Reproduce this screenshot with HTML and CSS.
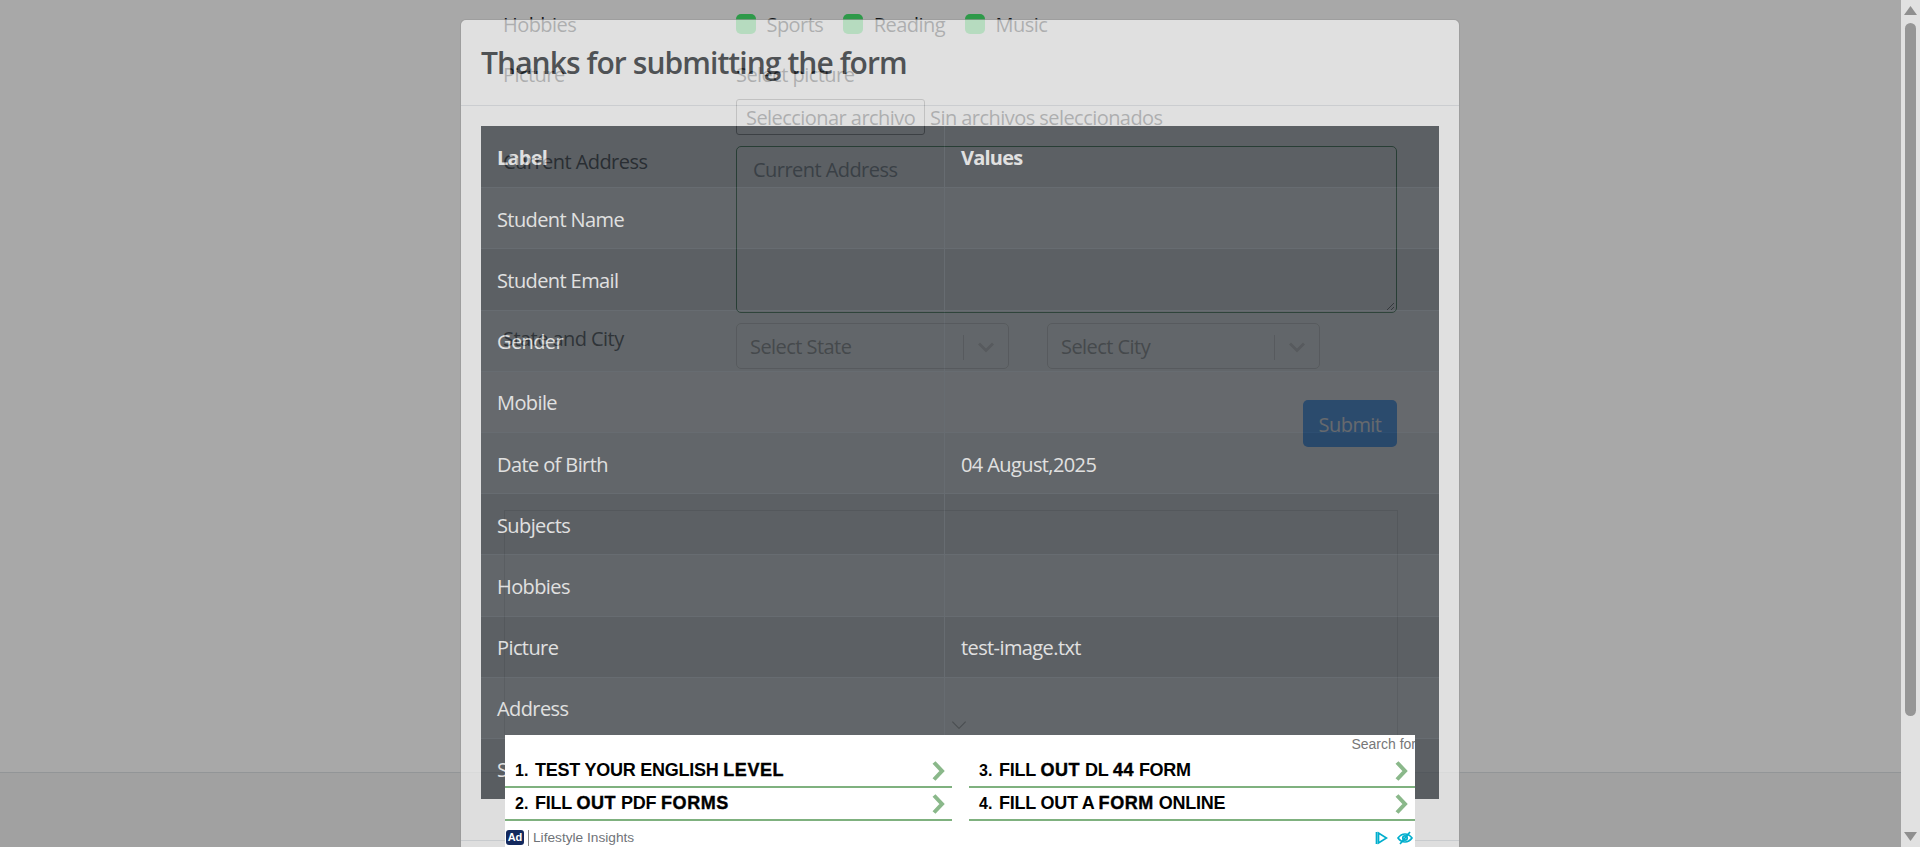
FILE: index.html
```html
<!DOCTYPE html>
<html lang="en">
<head>
  <meta charset="UTF-8">
  <meta name="viewport" content="width=device-width, initial-scale=1.0">
  <title>Practice Form</title>
  <link rel="stylesheet" href="styles.css">
</head>
<body>

  <div class="window">
    <div class="page">
      <form class="practiceForm">
        <div class="formRow hobbiesRow">
          <div class="formLabel">Hobbies</div>
          <div class="checks">
            <span class="check"><i class="checkBox"></i>Sports</span>
            <span class="check"><i class="checkBox"></i>Reading</span>
            <span class="check"><i class="checkBox"></i>Music</span>
          </div>
        </div>
        <div class="formRow pictureRow">
          <div class="formLabel">Picture</div>
          <div>
            <div class="pictureTitle">Select picture</div>
            <div class="fileLine"><span class="fileButton">Seleccionar archivo</span><span class="fileName">Sin archivos seleccionados</span></div>
          </div>
        </div>
        <div class="formRow addressRow">
          <div class="formLabel">Current Address</div>
          <div class="addressBox">
            Current Address
            <svg class="resizeGrip" viewBox="0 0 10 10"><path d="M9 2 2 9M9 6 6 9" /></svg>
          </div>
        </div>
        <div class="formRow stateRow">
          <div class="formLabel">State and City</div>
          <div class="selects">
            <div class="selectBox stateBox">
              <span class="selectText">Select State</span>
              <span class="selectBar"></span>
              <svg class="selectArrow" viewBox="0 0 20 20"><path d="M3 6.500 10 13.500l7-7" /></svg>
            </div>
            <div class="selectBox cityBox">
              <span class="selectText">Select City</span>
              <span class="selectBar"></span>
              <svg class="selectArrow" viewBox="0 0 20 20"><path d="M3 6.500 10 13.500l7-7" /></svg>
            </div>
          </div>
        </div>
        <div class="submitRow"><span class="submitButton">Submit</span></div>
        <div class="slotBox">
          <svg class="slotArrow" viewBox="0 0 20 12"><path d="M2 2l8 8 8-8" /></svg>
        </div>
      </form>
      <footer class="pageFooter"></footer>
    </div>

    <div class="backdrop"></div>

    <div class="modal">
      <div class="modalHeader">
        <div class="modalTitle">Thanks for submitting the form</div>
      </div>
      <div class="modalBody">
        <table class="resultTable">
          <thead>
            <tr><th class="labelCol">Label</th><th>Values</th></tr>
          </thead>
          <tbody>
            <tr><td>Student Name</td><td></td></tr>
            <tr><td>Student Email</td><td></td></tr>
            <tr><td>Gender</td><td></td></tr>
            <tr class="hoverRow"><td>Mobile</td><td></td></tr>
            <tr><td>Date of Birth</td><td>04 August,2025</td></tr>
            <tr><td>Subjects</td><td></td></tr>
            <tr><td>Hobbies</td><td></td></tr>
            <tr><td>Picture</td><td>test-image.txt</td></tr>
            <tr><td>Address</td><td></td></tr>
            <tr><td>State and City</td><td></td></tr>
          </tbody>
        </table>
      </div>
      <div class="modalFooter"></div>
    </div>

    <div class="adBanner">
      <div class="adSearch">Search for</div>
      <div class="adGrid">
        <div class="adItem"><span class="adNum">1.</span><span class="adText">TEST YOUR ENGLISH <b>LEVEL</b></span><svg class="adChevron" viewBox="0 0 13 20"><path d="M2 1.500 10 10l-8 8.500" /></svg></div>
        <div class="adItem"><span class="adNum">3.</span><span class="adText">FILL <b>OUT</b> DL <b>44</b> FORM</span><svg class="adChevron" viewBox="0 0 13 20"><path d="M2 1.500 10 10l-8 8.500" /></svg></div>
        <div class="adItem"><span class="adNum">2.</span><span class="adText">FILL <b>OUT</b> PDF <b>FORMS</b></span><svg class="adChevron" viewBox="0 0 13 20"><path d="M2 1.500 10 10l-8 8.500" /></svg></div>
        <div class="adItem"><span class="adNum">4.</span><span class="adText">FILL OUT A <b>FORM</b> ONLINE</span><svg class="adChevron" viewBox="0 0 13 20"><path d="M2 1.500 10 10l-8 8.500" /></svg></div>
      </div>
      <div class="adFoot">
        <span class="adBadge">Ad</span>
        <span class="adBrand">Lifestyle Insights</span>
        <span class="adIcons">
          <svg viewBox="0 0 13 14" width="13" height="14"><path d="M1.500 1v12M3.500 2v10l8-5z" /></svg>
          <svg viewBox="0 0 16 14" width="16" height="14"><path d="M1 7c2-2.700 4.500-4 7-4s5 1.300 7 4c-2 2.700-4.500 4-7 4S3 9.700 1 7z" /><circle cx="8" cy="7" r="2.200" /><path d="M13 1 3 13" /></svg>
        </span>
      </div>
    </div>
  </div>

  <div class="scrollBar">
    <svg class="scrollArrow" viewBox="0 0 13 9"><path d="M6.500 0 13 9H0z" /></svg>
    <div class="scrollTrack"><div class="scrollThumb"></div></div>
    <svg class="scrollArrow" viewBox="0 0 13 9"><path d="M0 0h13L6.500 9z" /></svg>
  </div>

</body>
</html>
```

FILE: styles.css
```css
html, body {
  height: 100%;
  margin: 0;
}
body {
  display: flex;
  overflow: hidden;
  font-family: 'Open Sans', 'Noto Sans', sans-serif;
  font-size: 20px;
  line-height: 1.5;
  color: #212529;
  background-color: #fff;
}
.window {
  position: relative;
  flex: 1;
  overflow: hidden;
}

/* page behind the modal */
.page {
  height: 100%;
  display: flex;
  flex-direction: column;
}
.practiceForm {
  flex: 1;
  padding: 10px 0 0 503px;
  letter-spacing: -0.55px;
}
.formRow {
  display: flex;
}
.formLabel {
  width: 233px;
}
.hobbiesRow {
  height: 50px;
}
.checks {
  display: flex;
  gap: 20px;
}
.check {
  display: flex;
  gap: 10.5px;
}
.checkBox {
  width: 20px;
  height: 20px;
  margin-top: 4px;
  border-radius: 5px;
  background-color: #46e970;
}
.pictureRow {
  height: 86px;
}
.pictureTitle {
  height: 39px;
}
.fileLine {
  display: flex;
  gap: 5px;
  align-items: center;
}
.fileButton {
  width: 189px;
  height: 36px;
  box-sizing: border-box;
  padding-left: 9px;
  border: 1px solid #767676;
  border-radius: 3px;
  line-height: 35px;
}
.fileName {
  padding-top: 2px;
}
.addressRow {
  height: 177px;
}
.addressRow .formLabel {
  margin-top: 1px;
}
.addressBox {
  position: relative;
  width: 661px;
  height: 167px;
  box-sizing: border-box;
  padding: 8px 16px;
  border: 1px solid #1f6b35;
  border-radius: 5px;
  color: #6c757d;
}
.resizeGrip {
  position: absolute;
  right: 1px;
  bottom: 1px;
  width: 10px;
  height: 10px;
  fill: none;
  stroke: #555;
}
.stateRow {
  height: 77px;
}
.stateRow .formLabel {
  margin-top: 1px;
}
.selects {
  display: flex;
  gap: 38px;
}
.selectBox {
  display: flex;
  align-items: center;
  width: 273px;
  height: 46px;
  box-sizing: border-box;
  padding: 2px 0 0 13px;
  border: 1px solid #ccc;
  border-radius: 5px;
  color: #808080;
}
.selectText {
  flex: 1;
}
.selectBar {
  width: 1px;
  height: 25px;
  background-color: #ccc;
}
.selectArrow {
  width: 20px;
  height: 20px;
  margin: 0 12px;
  fill: none;
  stroke: #ccc;
  stroke-width: 3;
}
.submitRow {
  display: flex;
  justify-content: flex-end;
  width: 894px;
  height: 62px;
}
.submitButton {
  width: 94px;
  height: 47px;
  border-radius: 5px;
  background-color: #007bff;
  color: #fff;
  text-align: center;
  line-height: 50px;
}
.slotBox {
  position: relative;
  width: 892px;
  height: 224px;
  margin: 48px 0 0 1px;
  border: 1px solid #ddd;
  border-bottom: none;
}
.slotArrow {
  position: absolute;
  left: 445px;
  bottom: 5px;
  width: 18px;
  height: 10px;
  fill: none;
  stroke: #999;
  stroke-width: 1.500;
}
.pageFooter {
  height: 74px;
  border-top: 1px solid #dee2e6;
  background-color: #f5f5f5;
}

/* modal, caught half way through its fade */
.backdrop {
  position: absolute;
  inset: 0;
  background-color: rgba(0, 0, 0, 0.34);
}
.modal {
  position: absolute;
  top: 19px;
  left: 460px;
  width: 1000px;
  box-sizing: border-box;
  border: 1px solid rgba(0, 0, 0, 0.4);
  border-radius: 6px;
  background-color: #fff;
  opacity: 0.65;
}
.modalHeader {
  padding: 20px;
  border-bottom: 1px solid #dee2e6;
}
.modalTitle {
  font-size: 30px;
  font-weight: 600;
  line-height: 1.5;
  letter-spacing: -0.93px;
}
.modalBody {
  padding: 20px;
}
.resultTable {
  width: 100%;
  margin-bottom: 21px;
  table-layout: fixed;
  border-collapse: collapse;
  background-color: #343a40;
  color: #fff;
  letter-spacing: -0.6px;
}
.resultTable th, .resultTable td {
  height: 57.2px;
  padding: 3px 16px 0;
  border: 1px solid #454d55;
  border-width: 1px 0 0 1px;
  text-align: left;
}
.resultTable th {
  height: 58.2px;
  font-weight: 700;
  letter-spacing: -0.8px;
}
.resultTable tr:first-child th {
  border-top: none;
}
.resultTable th:first-child, .resultTable td:first-child {
  border-left: none;
}
.labelCol {
  width: 431px;
}
.resultTable tbody tr:nth-child(odd) {
  background-color: rgba(255, 255, 255, 0.05);
}
.resultTable tbody tr.hoverRow {
  background-color: rgba(255, 255, 255, 0.075);
}
.modalFooter {
  height: 80px;
  border-top: 1px solid #dee2e6;
}

/* ad strip fixed to the bottom of the window */
.adBanner {
  position: absolute;
  left: 505px;
  bottom: 0;
  width: 910px;
  height: 112px;
  background-color: #fff;
  font-family: 'Liberation Sans', Arial, sans-serif;
  color: #000;
  overflow: hidden;
}
.adSearch {
  height: 19px;
  padding-top: 1px;
  margin-right: -1px;
  font-size: 14px;
  line-height: 16px;
  color: #777;
  text-align: right;
  white-space: nowrap;
}
.adGrid {
  display: grid;
  grid-template-columns: 447px 446px;
  gap: 0 17px;
}
.adItem {
  display: flex;
  align-items: center;
  height: 31px;
  border-bottom: 2px solid #7fb17f;
  font-size: 18px;
  font-weight: 700;
  line-height: 31px;
}
.adNum {
  width: 20px;
  padding-left: 10px;
  font-size: 16px;
}
.adText {
  flex: 1;
  letter-spacing: -0.25px;
}
.adText b {
  letter-spacing: 0.6px;
  -webkit-text-stroke: 0.4px #000;
}
.adChevron {
  width: 13px;
  height: 20px;
  margin-right: 7px;
  fill: none;
  stroke: #8ab88a;
  stroke-width: 4;
}
.adFoot {
  display: flex;
  align-items: center;
  height: 19px;
  padding-top: 7px;
  font-size: 13.7px;
  color: #6f7378;
}
.adBadge {
  width: 18px;
  height: 15px;
  margin-left: 1px;
  border-radius: 3px;
  background-color: #13295e;
  color: #fff;
  font-size: 11px;
  font-weight: 700;
  line-height: 15px;
  text-align: center;
}
.adBrand {
  flex: 1;
  margin-left: 4px;
  padding-left: 4px;
  border-left: 1px solid #888;
  line-height: 16px;
}
.adIcons {
  display: flex;
  gap: 9px;
  padding-right: 2px;
}
.adIcons svg {
  fill: none;
  stroke: #00aecd;
  stroke-width: 1.700;
}

/* browser scrollbar under the dim */
.scrollBar {
  display: flex;
  flex-direction: column;
  align-items: center;
  width: 19px;
  padding: 6px 0;
  box-sizing: border-box;
  background-color: #e1e1e1;
}
.scrollArrow {
  width: 13px;
  height: 9px;
  fill: #8f8f8f;
}
.scrollTrack {
  flex: 1;
  width: 11px;
  padding-top: 8px;
}
.scrollThumb {
  height: 693px;
  border-radius: 6px;
  background-color: #969696;
}
```
